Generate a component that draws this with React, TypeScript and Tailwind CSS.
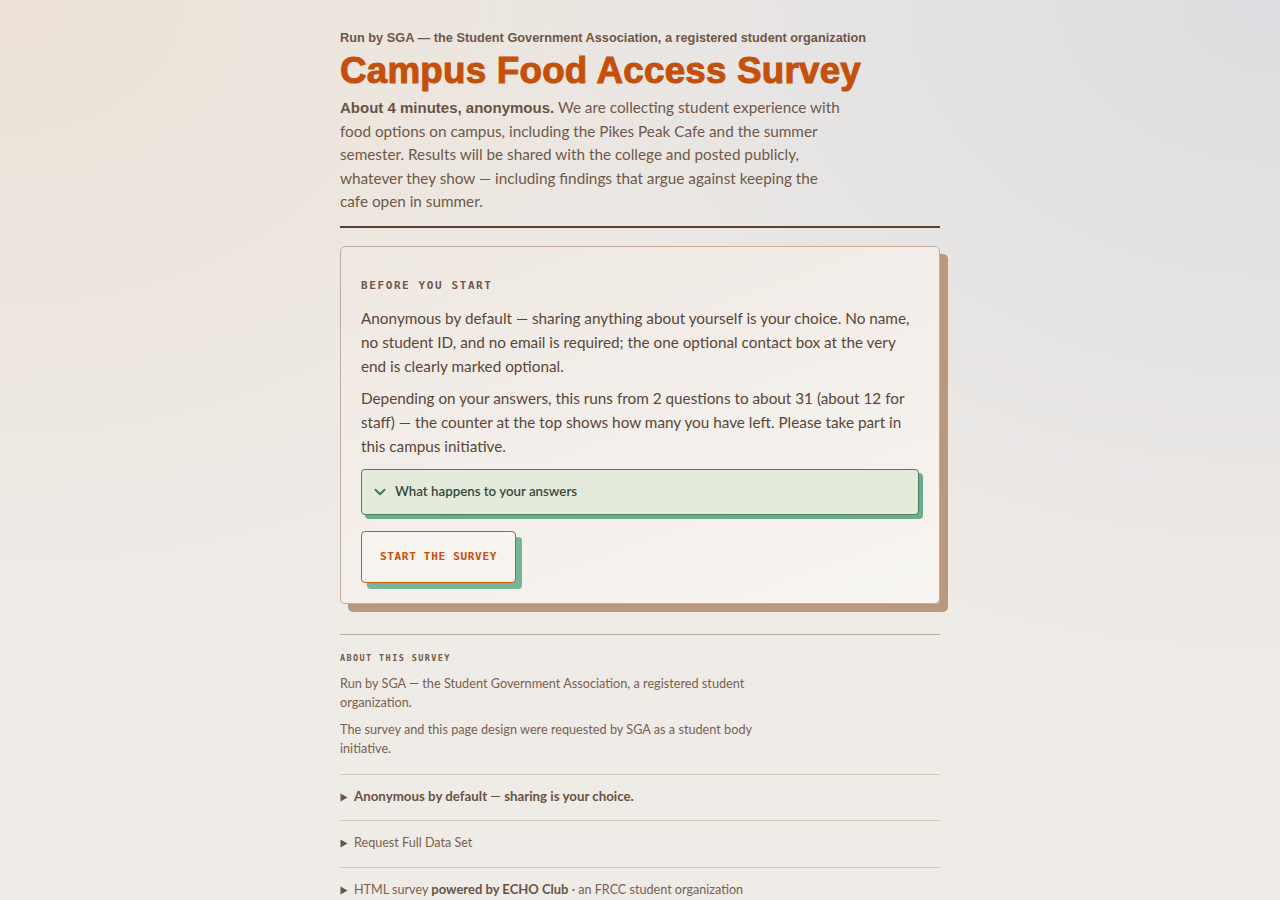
import React from 'react';

const body = "font-['Lato','Open_Sans',sans-serif]";
const mono = "font-['DejaVu_Sans_Mono',monospace]";

function Caret() {
  return (
    <svg width="8" height="9" viewBox="0 0 8 9" className="shrink-0 text-[#6b5443]">
      <path d="M0.5 0.5 L7.5 4.5 L0.5 8.5 Z" fill="currentColor" />
    </svg>
  );
}

export default function App() {
  return (
    <div className="min-h-screen w-full bg-[#efebe7] bg-[radial-gradient(ellipse_at_top_left,#ebe1d7_0%,rgba(235,225,215,0)_45%),radial-gradient(ellipse_at_top_right,#dcdde0_0%,rgba(220,221,224,0)_50%)]">
      <main className="mx-auto w-[600px] pt-[29px] pb-10">
        {/* Header */}
        <p className="font-['Liberation_Sans',Arial,sans-serif] text-[12.75px] font-bold leading-[18px] text-[#6e5646]">
          Run by SGA — the Student Government Association, a registered student organization
        </p>
        <h1 className="mt-[3px] font-['Liberation_Sans',Arial,sans-serif] text-[36.8px] font-bold leading-[42px] tracking-[0.2px] text-[#c4500b] [-webkit-text-stroke:1px_#c4500b]">
          Campus Food Access Survey
        </h1>
        <p className={`${body} mt-[4px] max-w-[500px] text-[15.3px] leading-[23.5px] text-[#6f5848]`}>
          <strong className="font-['Liberation_Sans',Arial,sans-serif] text-[15px] leading-[23.5px] font-bold text-[#6a5242]">About 4 minutes, anonymous.</strong>{' '}
          We are collecting student experience with food options on campus, including the Pikes Peak Cafe and the summer semester. Results will be shared with the college and posted publicly, whatever they show — including findings that argue against keeping the cafe open in summer.
        </p>
        <div className="mt-[12px] h-[2px] bg-[#5b4232]" />

        {/* Intro card */}
        <section className="mt-[18px] rounded-[5px] border border-[#c3ad9c] bg-[linear-gradient(160deg,#efe8e2_0%,#f7f5f2_100%)] px-5 pt-[31px] pb-5 shadow-[8px_8px_0_#bb977b]">
          <h2 className={`${mono} text-[11px] font-bold tracking-[1.6px] text-[#6f5848]`}>BEFORE YOU START</h2>
          <p className={`${body} mt-[12px] text-[15.3px] leading-[24px] text-[#5a4536]`}>
            Anonymous by default — sharing anything about yourself is your choice. No name, no student ID, and no email is required; the one optional contact box at the very end is clearly marked optional.
          </p>
          <p className={`${body} mt-[8px] text-[15.3px] leading-[24px] text-[#5a4536]`}>
            Depending on your answers, this runs from 2 questions to about 31 (about 12 for staff) — the counter at the top shows how many you have left. Please take part in this campus initiative.
          </p>

          <div className="mt-[11px] flex h-[46px] items-center gap-[8px] rounded-[4px] border border-[#4f7d5e] bg-[#e5ebdc] px-[11px] shadow-[4px_4px_0_#69ad8a]">
            <svg width="14" height="14" viewBox="0 0 14 14" className="text-[#3f7a55]">
              <path d="M2.5 4.8 L7 9.3 L11.5 4.8" fill="none" stroke="currentColor" strokeWidth="2" strokeLinecap="round" strokeLinejoin="round" />
            </svg>
            <span className={`${body} text-[13.3px] font-semibold text-[#34493b]`}>What happens to your answers</span>
          </div>

          <button className={`${mono} mt-[16px] flex h-[52px] w-[155px] items-center justify-center rounded-[4px] border border-[#cc5a14] bg-[#f7f3ef] text-[11px] font-bold tracking-[0.7px] text-[#c4500b] shadow-[6px_6px_0_#76b696]`}>
            START THE SURVEY
          </button>
        </section>

        {/* About */}
        <section className="mt-[30px] border-t border-[#c1ab9b] pt-[17px]">
          <h3 className={`${mono} text-[8.5px] font-bold tracking-[1.4px] text-[#6f5848]`}>ABOUT THIS SURVEY</h3>
          <div className={`${body} mt-[9px] max-w-[420px] text-[12.7px] leading-[19px] text-[#7a604e]`}>
            <p>Run by SGA — the Student Government Association, a registered student organization.</p>
            <p className="mt-[8px]">The survey and this page design were requested by SGA as a student body initiative.</p>
          </div>
        </section>

        <div className={`${body} mt-[16px] text-[12.6px] text-[#7a604e]`}>
          <div className="flex h-[46px] items-center gap-[6px] border-t border-[#d6cac0]">
            <Caret />
            <span className="text-[13.3px] font-bold text-[#6a5242]">Anonymous by default <span className="font-normal">—</span> sharing is your choice.</span>
          </div>
          <div className="flex h-[47px] items-center gap-[6px] border-t border-[#d6cac0]">
            <Caret />
            <span>Request Full Data Set</span>
          </div>
          <div className="flex h-[46px] items-center gap-[6px] border-t border-[#d6cac0]">
            <Caret />
            <span>
              HTML survey <strong className="text-[13px] font-bold text-[#6a5242]">powered by ECHO Club</strong> · an FRCC student organization
            </span>
          </div>
        </div>
      </main>
    </div>
  );
}
